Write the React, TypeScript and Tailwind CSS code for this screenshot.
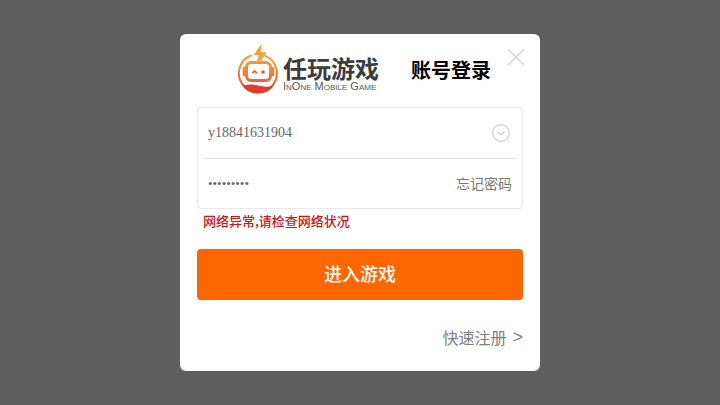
import { useState } from "react";

function RobotMark() {
  return (
    <svg viewBox="0 0 42 52" className="h-[52px] w-[42px] shrink-0" aria-hidden="true">
      <defs>
        <linearGradient id="flame" gradientUnits="userSpaceOnUse" x1="0" y1="0" x2="0" y2="50">
          <stop offset="0" stopColor="#fbb03f" />
          <stop offset="0.5" stopColor="#f48a38" />
          <stop offset="1" stopColor="#e53a2b" />
        </linearGradient>
      </defs>
      <g fill="none" stroke="url(#flame)" strokeLinecap="round">
        <path d="M14 11.500A19 19 0 1 0 28.500 11.800" strokeWidth="2" />
        <rect x="9.500" y="18.500" width="24" height="18" rx="4.500" strokeWidth="3" />
        <path d="M7 24v7M36 24v7" strokeWidth="2.600" />
      </g>
      <path d="M15.500 29.200l2.200-2.200 2.200 2.200" fill="none" stroke="#e9592f" strokeWidth="1.700" />
      <circle cx="26" cy="28" r="1.800" fill="#e9592f" />
      <path d="M24.500 0L16.500 11h5.300L19.500 18.500h3.500L29.500 8.200h-5.800z" fill="#f9a33c" />
      <path d="M5.500 42Q13.500 39.500 21 41.500T36.500 42Q31 49.500 21 49.500T5.500 42z" fill="#e23a2b" />
    </svg>
  );
}

function Logo() {
  return (
    <div className="flex items-start gap-1">
      <RobotMark />
      <div className="whitespace-nowrap pt-3 text-[#3b3b3b]">
        <div className="text-2xl leading-6 font-bold">任玩游戏</div>
        <div className="font-['Liberation_Sans',sans-serif] text-[11px] leading-3 text-[#555555] [font-variant:small-caps]">
          InOne Mobile Game
        </div>
      </div>
    </div>
  );
}

export default function App() {
  const [account, setAccount] = useState("y18841631904");
  const [password, setPassword] = useState("123456789");

  return (
    <main className="flex min-h-screen items-center justify-center bg-[#5f5f5f] font-['Noto_Sans_CJK_SC',sans-serif]">
      <form
        className="w-1/2 min-w-[360px] rounded-md bg-white px-[17px] pb-[22px]"
        onSubmit={(event) => event.preventDefault()}
      >
        <header className="flex h-[73px] items-start pt-2.5">
          <div className="ml-10">
            <Logo />
          </div>
          <h1 className="ml-8 whitespace-nowrap pt-3 text-xl leading-7 font-bold text-black">账号登录</h1>
          <button type="button" aria-label="关闭" className="-mr-0.5 ml-auto pt-1">
            <svg viewBox="0 0 18 18" className="size-[18px]" fill="none" stroke="#cfcfcf" strokeWidth="1.2">
              <path d="M1 1l16 16M17 1L1 17" />
            </svg>
          </button>
        </header>

        <div className="rounded border border-[#e8e8e8] px-[5px]">
          <div className="flex h-[51px] items-center border-b border-[#e2e2e2] px-[5px]">
            <input
              aria-label="账号"
              className="min-w-0 flex-1 font-['Liberation_Serif',serif] text-sm text-[#666666] outline-none"
              value={account}
              onChange={(event) => setAccount(event.target.value)}
            />
            <button type="button" aria-label="选择账号" className="mr-0.5">
              <svg viewBox="0 0 18 18" className="size-[18px]" fill="none" stroke="#cccccc" strokeWidth="1.2">
                <circle cx="9" cy="9" r="8.300" />
                <path d="M5.500 7.500L9 11l3.500-3.500" />
              </svg>
            </button>
          </div>
          <div className="flex h-[49px] items-center px-[5px]">
            <input
              type="password"
              aria-label="密码"
              className="min-w-0 flex-1 font-['Liberation_Serif',serif] text-[13px] leading-5 text-[#666666] outline-none"
              value={password}
              onChange={(event) => setPassword(event.target.value)}
            />
            <a href="#forgot" className="pb-0.5 text-sm leading-5 text-[#777777]">
              忘记密码
            </a>
          </div>
        </div>

        <p role="alert" className="h-10 px-1.5 text-[13px] leading-6 font-medium text-[#cc1414]">
          网络异常,请检查网络状况
        </p>

        <button
          type="submit"
          className="h-[51px] w-full rounded bg-[#ff6600] pb-1 text-lg leading-6 font-medium text-white"
        >
          进入游戏
        </button>

        <div className="flex justify-end pt-[25px]">
          <a href="#register" className="flex items-center gap-1.5 text-base leading-6 text-[#808080]">
            <span>快速注册</span>
            <span className="font-['Liberation_Sans',sans-serif] text-lg leading-6">&gt;</span>
          </a>
        </div>
      </form>
    </main>
  );
}
